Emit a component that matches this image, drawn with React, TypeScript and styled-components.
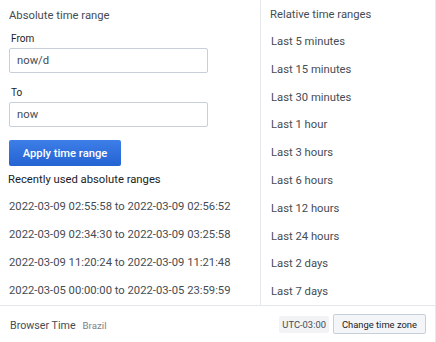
import React from "react";
import styled, { createGlobalStyle } from "styled-components";

const Global = createGlobalStyle`
  html, body { margin: 0; padding: 0; background: #fff; }
  body { font-family: Roboto, "Liberation Sans", sans-serif; }
  * { box-sizing: border-box; }
`;

const Panel = styled.div`
  width: 436px;
  height: 342px;
  display: flex;
  flex-direction: column;
  background: #fff;
  border-right: 1px solid #e4e7eb;
  color: #464c54;
`;

const Body = styled.div`
  display: flex;
  height: 306px;
  border-bottom: 1px solid #e4e7eb;
`;

const LeftCol = styled.div`
  width: 260px;
  padding: 9px 0 0 9px;
  display: flex;
  flex-direction: column;
`;

const RightCol = styled.div`
  flex: 1;
  border-left: 1px solid #e4e7eb;
  padding: 8px 0 0 9px;
  display: flex;
  flex-direction: column;
`;

const Heading = styled.div`
  font-size: 11.25px;
  line-height: 14px;
  color: #464c54;
`;

const Label = styled.div<{ $top: number }>`
  font-size: 10px;
  line-height: 12px;
  margin: ${(p) => p.$top}px 0 3px 2px;
  color: #202226;
`;

const Input = styled.div`
  width: 199px;
  height: 25px;
  border: 1px solid #c7d0d9;
  border-radius: 2px;
  padding: 0 7px;
  display: flex;
  align-items: center;
  font-size: 11.25px;
  color: #464c54;
`;

const ApplyButton = styled.button`
  margin-top: 13px;
  width: 112px;
  height: 26px;
  border: none;
  border-radius: 2px;
  background: linear-gradient(#3d7ee8, #2463d2);
  color: #fff;
  font-family: Roboto, "Liberation Sans", sans-serif;
  font-weight: 500;
  font-size: 11.2px;
  padding: 0;
`;

const SubHeading = styled.div`
  font-size: 11.25px;
  line-height: 14px;
  margin: 7px 0 0 -1px;
  color: #202226;
`;

const RangeList = styled.div`
  display: flex;
  flex-direction: column;
  margin-top: 13px;
  gap: 14px;
`;

const RangeItem = styled.div`
  font-size: 11.25px;
  line-height: 14px;
  color: #464c54;
`;

const RelList = styled.div`
  display: flex;
  flex-direction: column;
  margin-top: 13px;
  gap: 13.8px;
`;

const RelItem = styled.div`
  font-size: 11.25px;
  line-height: 14px;
  padding-left: 1px;
  color: #464c54;
`;

const Footer = styled.div`
  flex: 1;
  display: flex;
  align-items: center;
  padding: 0 9px 0 10px;
`;

const ZoneName = styled.span`
  font-size: 10.7px;
  margin-top: 2px;
  color: #464c54;
`;

const Country = styled.span`
  font-size: 9.7px;
  margin-top: 2px;
  color: #7b8087;
  margin-left: 7px;
`;

const Spacer = styled.div`
  flex: 1;
`;

const Offset = styled.span`
  background: #f1f3f5;
  font-size: 9.4px;
  padding: 0 3px;
  height: 17px;
  margin-right: 4px;
  display: flex;
  align-items: center;
  color: #464c54;
  border-radius: 2px;
`;

const ChangeButton = styled.button`
  height: 20px;
  border: 1px solid #c7d0d9;
  background: #f4f5f8;
  border-radius: 2px;
  font-family: Roboto, "Liberation Sans", sans-serif;
  font-size: 9.4px;
  color: #202226;
  padding: 0 8px;
`;

const ranges = [
  "2022-03-09 02:55:58 to 2022-03-09 02:56:52",
  "2022-03-09 02:34:30 to 2022-03-09 03:25:58",
  "2022-03-09 11:20:24 to 2022-03-09 11:21:48",
  "2022-03-05 00:00:00 to 2022-03-05 23:59:59",
];

const relative = [
  "Last 5 minutes",
  "Last 15 minutes",
  "Last 30 minutes",
  "Last 1 hour",
  "Last 3 hours",
  "Last 6 hours",
  "Last 12 hours",
  "Last 24 hours",
  "Last 2 days",
  "Last 7 days",
];

export default function App() {
  return (
    <>
      <Global />
      <Panel>
        <Body>
          <LeftCol>
            <Heading>Absolute time range</Heading>
            <Label $top={10}>From</Label>
            <Input>now/d</Input>
            <Label $top={14}>To</Label>
            <Input>now</Input>
            <ApplyButton>Apply time range</ApplyButton>
            <SubHeading>Recently used absolute ranges</SubHeading>
            <RangeList>
              {ranges.map((r) => (
                <RangeItem key={r}>{r}</RangeItem>
              ))}
            </RangeList>
          </LeftCol>
          <RightCol>
            <Heading>Relative time ranges</Heading>
            <RelList>
              {relative.map((r) => (
                <RelItem key={r}>{r}</RelItem>
              ))}
            </RelList>
          </RightCol>
        </Body>
        <Footer>
          <ZoneName>Browser Time</ZoneName>
          <Country>Brazil</Country>
          <Spacer />
          <Offset>UTC-03:00</Offset>
          <ChangeButton>Change time zone</ChangeButton>
        </Footer>
      </Panel>
    </>
  );
}
